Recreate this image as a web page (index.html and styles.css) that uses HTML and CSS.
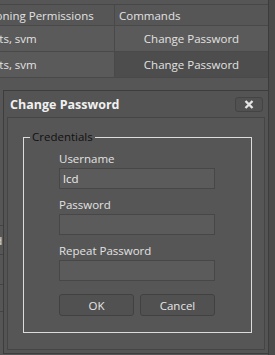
FILE: index.html
```html
<!DOCTYPE html>
<html lang="en">
<head>
    <meta charset="utf-8">
    <title>Change Password</title>
    <link rel="stylesheet" href="styles.css">
</head>
<body>
    <div class="page">
        <!-- Griglia utenti dietro la finestra -->
        <div class="grid">
            <div class="grid-row grid-head">
                <div class="cell cell-perm">Provisioning Permissions</div>
                <div class="cell cell-cmd">Commands</div>
            </div>
            <div class="grid-row">
                <div class="cell cell-perm">Accounts, svm</div>
                <div class="cell cell-cmd cell-link">Change Password</div>
            </div>
            <div class="grid-row">
                <div class="cell cell-perm">Accounts, svm</div>
                <div class="cell cell-cmd cell-link cell-hover">Change Password</div>
            </div>
        </div>

        <div class="toolbar">
            <span class="tool-btn">Add</span>
        </div>
        <div class="footer-bar"></div>
    </div>

    <!-- Finestra modale -->
    <div class="dialog">
        <div class="dialog-title">
            <span class="title-text">Change Password</span>
            <button class="close-btn" title="Close">
                <svg width="10" height="9" viewBox="0 0 10 9">
                    <path d="M1.5 1 L8.5 8 M8.5 1 L1.5 8" stroke="#e4e4e4" stroke-width="2.4" stroke-linecap="butt"/>
                </svg>
            </button>
        </div>
        <div class="dialog-body">
            <fieldset class="creds">
                <legend>Credentials</legend>
                <div class="creds-inner">
                    <label class="field-label">Username</label>
                    <div class="field-input">lcd</div>

                    <label class="field-label">Password</label>
                    <div class="field-input"></div>

                    <label class="field-label">Repeat Password</label>
                    <div class="field-input"></div>

                    <div class="actions">
                        <button class="btn">OK</button>
                        <button class="btn">Cancel</button>
                    </div>
                </div>
            </fieldset>
        </div>
    </div>
</body>
</html>
```

FILE: styles.css
```css
body {
    margin: 0;
    padding: 0;
    width: 275px;
    height: 355px;
    overflow: hidden;
    position: relative;
    background-color: #4b4b4b;
    font-family: 'Open Sans', 'Noto Sans', sans-serif;
    font-size: 11.5px;
    color: #e2e2e2;
}
.page {
    width: 269px;
    height: 355px;
    background-color: #565656;
    border-right: 1px solid #3c3c3c;
    overflow: hidden;
    padding-top: 4px;
    box-sizing: border-box;
}

/* griglia */
.grid {
    margin-left: -44px;
    border-top: 1px solid #474747;
}
.grid-row {
    display: flex;
    height: 25px;
    border-bottom: 1px solid #494949;
    background-color: #5a5a5a;
}
.grid-head {
    height: 20px;
    background-color: #565656;
}
.cell {
    display: flex;
    align-items: center;
    padding: 0 4px;
    white-space: nowrap;
}
.cell-perm {
    width: 150px;
    border-right: 1px solid #494949;
}
.cell-cmd {
    flex: 1;
}
.cell-link {
    justify-content: center;
}
.cell-hover {
    background-color: #4d4d4d;
}

.toolbar {
    margin-top: 147px;
    height: 28px;
    border-top: 1px solid #444;
    border-bottom: 1px solid #444;
    display: flex;
    align-items: center;
}
.tool-btn {
    margin-left: -19px;
}
.footer-bar {
    margin-top: 29px;
    height: 26px;
    border-top: 1px solid #444;
    border-bottom: 1px solid #444;
}

/* finestra */
.dialog {
    position: absolute;
    left: 3px;
    top: 90px;
    width: 266px;
    height: 264px;
    box-sizing: border-box;
    background-color: #545454;
    border: 1px solid #3d3d3d;
    display: flex;
    flex-direction: column;
}
.dialog-title {
    height: 26px;
    display: flex;
    align-items: center;
    justify-content: space-between;
    padding: 0 5px 0 6px;
}
.title-text {
    font-weight: bold;
    font-size: 12.5px;
    color: #f0f0f0;
}
.close-btn {
    width: 28px;
    height: 15px;
    padding: 0;
    border: 1px solid #444;
    border-radius: 3px;
    background-color: #515151;
    display: flex;
    align-items: center;
    justify-content: center;
}
.dialog-body {
    flex: 1;
    margin: 0 3px 3px 3px;
    border: 1px solid #454545;
    background-color: #565656;
    padding: 11px 12px 14px 15px;
}

.creds {
    margin: 0;
    padding: 0;
    border: 1px solid #dcdcdc;
    height: 204px;
    box-sizing: border-box;
}
.creds legend {
    margin-left: 6px;
    padding: 0 2px;
    color: #111;
    line-height: 16px;
}
.creds-inner {
    display: flex;
    flex-direction: column;
    padding: 6px 36px 0 35px;
}
.field-label {
    line-height: 16px;
    margin-bottom: 1px;
}
.field-input {
    height: 21px;
    box-sizing: border-box;
    border: 1px solid #474747;
    background-color: #5b5b5b;
    padding: 0 3px;
    line-height: 19px;
    color: #ececec;
    margin-bottom: 8px;
}
.actions {
    display: flex;
    gap: 6px;
    margin-top: 5px;
}
.btn {
    flex: 1;
    height: 22px;
    border: 1px solid #414141;
    border-radius: 3px;
    background-color: #515151;
    color: #e6e6e6;
    font-family: 'Open Sans', 'Noto Sans', sans-serif;
    font-size: 11.5px;
    padding: 0;
}
```
